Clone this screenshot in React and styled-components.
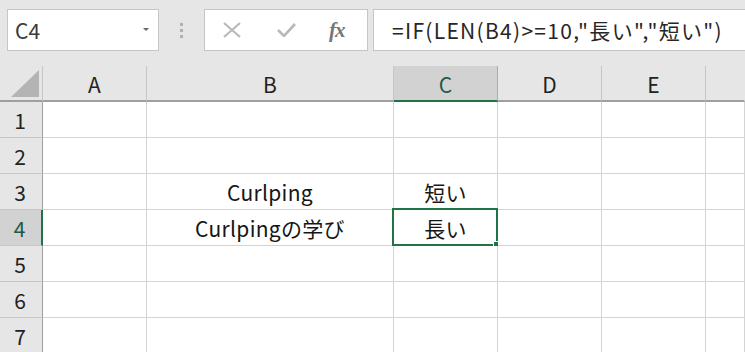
import React from "react";
import styled, { createGlobalStyle } from "styled-components";

const GREEN = "#217346";
const FONT = `"Noto Sans CJK JP", "Noto Sans", sans-serif`;

const columns = [
  { key: "A", width: 104 },
  { key: "B", width: 247 },
  { key: "C", width: 104 },
  { key: "D", width: 104 },
  { key: "E", width: 104 },
];

const cells = {
  B3: "Curlping",
  C3: "短い",
  B4: "Curlpingの学び",
  C4: "長い",
};

const rows = [1, 2, 3, 4, 5, 6, 7];
const activeCol = "C";
const activeRow = 4;

// Component
export default function App() {
  return (
    <>
      <GlobalStyle />
      <Window>
        <FormulaBar>
          <NameBox>
            <span>C4</span>
            <Caret />
          </NameBox>
          <Grip>
            <i />
            <i />
            <i />
          </Grip>
          <FxBox>
            <svg width="18" height="16" viewBox="0 0 18 16">
              <path d="M1 1 L17 15 M17 1 L1 15" stroke="#b9b9b9" strokeWidth="2.2" fill="none" />
            </svg>
            <svg width="19" height="14" viewBox="0 0 19 14">
              <path d="M1 7 L7 13 L18 1" stroke="#b9b9b9" strokeWidth="2.6" fill="none" />
            </svg>
            <Fx>fx</Fx>
          </FxBox>
          <FormulaInput>=IF(LEN(B4)&gt;=10,"長い","短い")</FormulaInput>
        </FormulaBar>

        <Sheet $cols={columns}>
          <Corner>
            <Triangle />
          </Corner>
          {columns.map((c) => (
            <ColHeader key={c.key} $active={c.key === activeCol}>
              {c.key}
            </ColHeader>
          ))}
          <ColHeader $filler />

          {rows.map((r) => (
            <React.Fragment key={r}>
              <RowHeader $active={r === activeRow}>{r}</RowHeader>
              {columns.map((c) => {
                const id = `${c.key}${r}`;
                const selected = c.key === activeCol && r === activeRow;
                return (
                  <Cell key={id}>
                    {cells[id]}
                    {selected && (
                      <Selection>
                        <Handle />
                      </Selection>
                    )}
                  </Cell>
                );
              })}
              <Cell />
            </React.Fragment>
          ))}
        </Sheet>
      </Window>
    </>
  );
}

// Styled Components
const GlobalStyle = createGlobalStyle`
  html, body {
    margin: 0;
    padding: 0;
    background: #ffffff;
    overflow: hidden;
  }
`;

const Window = styled.div`
  width: 745px;
  height: 352px;
  overflow: hidden;
  font-family: ${FONT};
  background: #ffffff;
`;

const FormulaBar = styled.div`
  display: flex;
  align-items: flex-start;
  height: 66px;
  box-sizing: border-box;
  padding: 9px 0 0 7px;
  background: #e6e6e6;
`;

const Box = styled.div`
  height: 42px;
  box-sizing: border-box;
  border: 1px solid #c6c6c6;
  background: #ffffff;
  display: flex;
  align-items: center;
`;

const NameBox = styled(Box)`
  width: 152px;
  padding: 0 9px 0 7px;
  justify-content: space-between;
  font-size: 21px;
  color: #3a3a3a;
`;

const Caret = styled.span`
  width: 0;
  height: 0;
  border-left: 3px solid transparent;
  border-right: 3px solid transparent;
  border-top: 3px solid #666666;
  margin-top: -2px;
`;

const Grip = styled.div`
  width: 45px;
  height: 42px;
  display: flex;
  flex-direction: column;
  align-items: center;
  justify-content: center;
  gap: 3px;

  i {
    display: block;
    width: 3px;
    height: 3px;
    background: #b0b0b0;
  }
`;

const FxBox = styled(Box)`
  width: 164px;
  padding-left: 18px;

  svg:nth-child(2) {
    margin-left: 36px;
  }
`;

const Fx = styled.span`
  margin-left: 33px;
  font-family: "Liberation Serif", "DejaVu Serif", serif;
  font-style: italic;
  font-weight: bold;
  font-size: 21px;
  color: #767676;
  letter-spacing: -1px;
`;

const FormulaInput = styled(Box)`
  flex: 1;
  margin-left: 5px;
  margin-right: -4px;
  padding-left: 18px;
  font-size: 21px;
  letter-spacing: 1.3px;
  color: #262626;
  white-space: nowrap;
`;

const Sheet = styled.div`
  display: grid;
  grid-template-columns: 43px ${(p) => p.$cols.map((c) => `${c.width}px`).join(" ")} 1fr;
  grid-template-rows: 36px repeat(7, 36px);
  background: #e6e6e6;
`;

const HeaderBase = styled.div`
  box-sizing: border-box;
  display: flex;
  align-items: center;
  justify-content: center;
  font-size: 21px;
  color: #222222;
`;

const Corner = styled(HeaderBase)`
  border-right: 1px solid #c6c6c6;
  border-bottom: 2px solid #9f9f9f;
  position: relative;
`;

const Triangle = styled.span`
  position: absolute;
  right: 3px;
  bottom: 3px;
  width: 0;
  height: 0;
  border-left: 28px solid transparent;
  border-bottom: 27px solid #b4b4b4;
`;

const ColHeader = styled(HeaderBase)`
  border-right: 1px solid ${(p) => (p.$filler ? "transparent" : p.$active ? "#ababab" : "#c6c6c6")};
  border-bottom: 2px solid ${(p) => (p.$active ? GREEN : "#9f9f9f")};
  background: ${(p) => (p.$active ? "#d2d2d2" : "#e6e6e6")};
  color: ${(p) => (p.$active ? "#1e5a46" : "#222222")};
  padding-top: 2px;
`;

const RowHeader = styled(HeaderBase)`
  border-right: ${(p) => (p.$active ? `2px solid ${GREEN}` : "1px solid #9f9f9f")};
  border-bottom: 1px solid #c6c6c6;
  background: ${(p) => (p.$active ? "#d2d2d2" : "#e6e6e6")};
  color: ${(p) => (p.$active ? "#1e5a46" : "#222222")};
  padding-right: 2px;
`;

const Cell = styled.div`
  position: relative;
  box-sizing: border-box;
  border-right: 1px solid #d4d4d4;
  border-bottom: 1px solid #d4d4d4;
  background: #ffffff;
  display: flex;
  align-items: center;
  justify-content: center;
  font-size: 21px;
  letter-spacing: 0.3px;
  color: #161616;
  white-space: nowrap;
`;

const Selection = styled.span`
  position: absolute;
  top: -2px;
  left: -2px;
  right: -1px;
  bottom: -1px;
  border: 2px solid ${GREEN};
  pointer-events: none;
`;

const Handle = styled.span`
  position: absolute;
  right: -5px;
  bottom: -5px;
  width: 6px;
  height: 6px;
  background: ${GREEN};
  border: 1px solid #ffffff;
`;
